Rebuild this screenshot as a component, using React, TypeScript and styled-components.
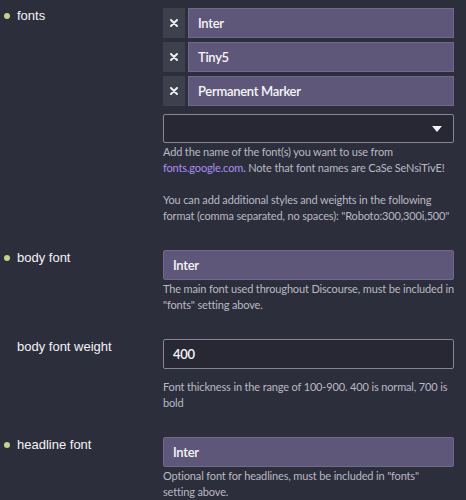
import React from 'react';
import styled, { createGlobalStyle } from 'styled-components';

const GlobalStyle = createGlobalStyle`
  html, body {
    margin: 0;
    padding: 0;
    background: #2d2e3c;
  }
`;

type Setting = {
  name: string;
  overridden: boolean;
  kind: 'value' | 'number';
  value: string;
  help: string;
};

const fontList = ['Inter', 'Tiny5', 'Permanent Marker'];

const settings: Setting[] = [
  {
    name: 'body font',
    overridden: true,
    kind: 'value',
    value: 'Inter',
    help: 'The main font used throughout Discourse, must be included in "fonts" setting above.',
  },
  {
    name: 'body font weight',
    overridden: false,
    kind: 'number',
    value: '400',
    help: 'Font thickness in the range of 100-900. 400 is normal, 700 is bold',
  },
  {
    name: 'headline font',
    overridden: true,
    kind: 'value',
    value: 'Inter',
    help: 'Optional font for headlines, must be included in "fonts" setting\u00a0above.',
  },
];

const CrossIcon = () => (
  <svg width="8" height="8" viewBox="0 0 8 8">
    <path d="M1 1 L7 7 M7 1 L1 7" stroke="#ececf0" strokeWidth="2" strokeLinecap="round" />
  </svg>
);

const App = () => {
  return (
    <>
      <GlobalStyle />
      <Page>
        <SettingRow>
          <Label $overridden>fonts</Label>
          <Controls>
            <ListRows>
              {fontList.map((font) => (
                <ListRow key={font}>
                  <RemoveButton aria-label="remove">
                    <CrossIcon />
                  </RemoveButton>
                  <ValueBox $inList>{font}</ValueBox>
                </ListRow>
              ))}
            </ListRows>
            <ComboBox>
              <svg width="10" height="6" viewBox="0 0 10 6">
                <path d="M0 0 H10 L5 6 Z" fill="#f2f2f2" />
              </svg>
            </ComboBox>
            <Help>
              Add the name of the font(s) you want to use from{' '}
              <Link>fonts.google.com</Link>. Note that font names are CaSe SeNsiTivE!
              <br />
              <br />
              You can add additional styles and weights in the following format (comma
              separated, no spaces): "Roboto:300,300i,500"
            </Help>
          </Controls>
        </SettingRow>

        {settings.map((s) => (
          <SettingRow key={s.name}>
            <Label $overridden={s.overridden}>{s.name}</Label>
            <Controls>
              {s.kind === 'value' ? (
                <ValueBox>{s.value}</ValueBox>
              ) : (
                <NumberBox>{s.value}</NumberBox>
              )}
              <Help>{s.help}</Help>
            </Controls>
          </SettingRow>
        ))}
      </Page>
    </>
  );
};

export default App;

const Page = styled.div`
  padding: 8px 12px 0 4px;
  display: flex;
  flex-direction: column;
  gap: 26px;
`;

const SettingRow = styled.div`
  display: grid;
  grid-template-columns: 159px 291px;
  align-items: start;
`;

const Label = styled.div<{ $overridden?: boolean }>`
  display: flex;
  align-items: center;
  gap: 7px;
  height: 15px;
  font-family: 'Liberation Sans', Arial, sans-serif;
  font-size: 13px;
  color: #f4f4f6;

  &::before {
    content: '';
    flex: 0 0 6px;
    height: 6px;
    border-radius: 50%;
    background: ${(p) => (p.$overridden ? '#c7d08f' : 'transparent')};
  }
`;

const Controls = styled.div`
  display: flex;
  flex-direction: column;
`;

const ListRows = styled.div`
  display: flex;
  flex-direction: column;
  gap: 4px;
  margin-bottom: 8px;
`;

const ListRow = styled.div`
  display: flex;
  gap: 3px;
`;

const RemoveButton = styled.div`
  flex: 0 0 22px;
  height: 30px;
  display: flex;
  align-items: center;
  justify-content: center;
  background: #3f404e;
`;

const boxText = `
  box-sizing: border-box;
  height: 30px;
  display: flex;
  align-items: center;
  padding-left: 9px;
  color: #f6f6f8;
  font-family: Lato, sans-serif;
  font-size: 13px;
  font-weight: 600;
  letter-spacing: -0.3px;
`;

const ValueBox = styled.div<{ $inList?: boolean }>`
  ${boxText}
  flex: ${(p) => (p.$inList ? '1' : '0 0 auto')};
  background: #5e577a;
  border: 1px solid #70698c;
  border-radius: ${(p) => (p.$inList ? '0' : '2px')};
`;

const NumberBox = styled.div`
  ${boxText}
  margin-bottom: 9px;
  background: #272834;
  border: 1px solid #858593;
  border-radius: 2px;
`;

const ComboBox = styled.div`
  box-sizing: border-box;
  height: 29px;
  display: flex;
  align-items: center;
  justify-content: flex-end;
  padding-right: 11px;
  background: #272834;
  border: 1px solid #858593;
  border-radius: 2px;
`;

const Help = styled.div`
  margin-top: 1px;
  font-family: Lato, sans-serif;
  font-size: 11px;
  letter-spacing: -0.15px;
  line-height: 16px;
  color: #b9b9c3;
`;

const Link = styled.span`
  color: #a98ff3;
`;
